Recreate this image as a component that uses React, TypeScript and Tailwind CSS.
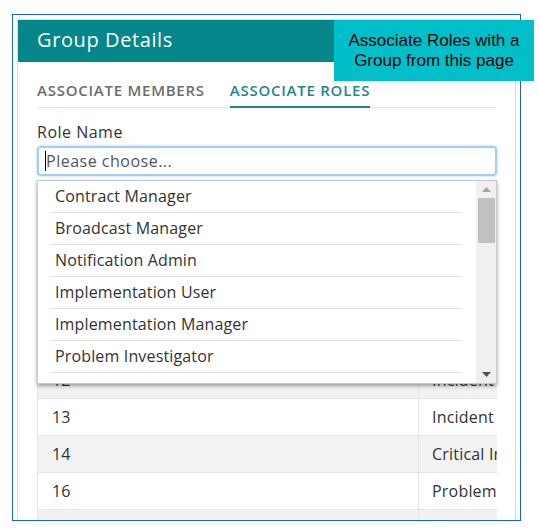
import React from "react";

const items = [
  "Contract Manager",
  "Broadcast Manager",
  "Notification Admin",
  "Implementation User",
  "Implementation Manager",
  "Problem Investigator",
];

const rows = [
  { id: "8", name: "Incident Manager" },
  { id: "9", name: "Change Manager" },
  { id: "10", name: "Release Manager" },
  { id: "11", name: "Incident User" },
  { id: "12", name: "Incident Analyst" },
  { id: "13", name: "Incident Coordinator" },
  { id: "14", name: "Critical Incident Manager" },
  { id: "16", name: "Problem Manager" },
  { id: "17", name: "Service Desk" },
];

export default function App() {
  return (
    <div className="relative w-[539px] h-[531px] bg-white overflow-hidden" style={{ fontFamily: '"Open Sans", sans-serif' }}>
      <div className="ml-[12px] mt-[14px] w-[509px] h-[507px] border border-[#1d61e0] p-[4px] overflow-hidden">
        <div className="relative w-[499px] h-[520px] border border-[#dcdcdc] bg-white">
          <div className="h-[42px] bg-[#04868b] flex items-center pl-[19px] pb-[3px]">
            <span className="text-white text-[20px] leading-none tracking-[0.6px]">Group Details</span>
          </div>
          <div className="px-[19px] pt-[18px]">
            <div className="flex gap-[25px] border-b border-[#e3e3e3]">
              <div className="text-[15px] leading-[20px] font-semibold text-[#6d6d6d] tracking-[0.75px] pb-[7px]">ASSOCIATE MEMBERS</div>
              <div className="text-[15px] leading-[20px] font-semibold text-[#1f868b] tracking-[0.75px] pb-[5px] border-b-2 border-[#1f868b] -mb-px">ASSOCIATE ROLES</div>
            </div>
            <div className="mt-[14px] text-[16px] leading-[20px] text-[#333] tracking-[0.5px]">Role Name</div>
            <div className="mt-[4px] h-[30px] w-[460px] rounded-[4px] border-2 border-[#a5cdf2] shadow-[0_0_3px_rgba(100,160,230,0.5)] flex items-center pl-[6px]">
              <span className="w-px h-[20px] bg-black" />
              <span className="text-[16px] text-[#555] tracking-[0.5px]">Please choose...</span>
            </div>
            <div className="mt-[37px] w-[460px] overflow-hidden">
              {rows.map((r, i) => (
                <div
                  key={r.id}
                  className={`grid grid-cols-[381px_200px] h-[37px] border-t border-[#e4e4e4] ${i % 2 === 0 ? "bg-[#f2f2f2]" : "bg-white"}`}
                >
                  <div className="flex items-center pl-[14px] text-[16px] text-[#333] border-l border-[#e4e4e4]">{r.id}</div>
                  <div className="flex items-center pl-[13px] text-[16px] text-[#333] border-l border-[#e4e4e4] whitespace-nowrap tracking-[0.2px]">{r.name}</div>
                </div>
              ))}
            </div>
          </div>

          <div className="absolute left-[19px] top-[160px] w-[460px] h-[204px] bg-white border border-[#c8c8c8] shadow-[0_2px_4px_rgba(0,0,0,0.35)] flex">
            <div className="flex-1">
              <div className="ml-[12px] w-[412px]">
                {items.map((t) => (
                  <div key={t} className="h-[32px] border-b border-[#e0e0e0] flex items-center pl-[5px] pb-[1px] text-[16px] text-[#333] tracking-[0.15px]">
                    {t}
                  </div>
                ))}
              </div>
            </div>
            <div className="w-[20px] h-full bg-[#f0f0f0] flex flex-col items-center">
              <div className="h-[17px] flex items-center justify-center">
                <svg width="9" height="5" viewBox="0 0 9 5"><polygon points="0,5 9,5 4.5,0" fill="#a3a3a3" /></svg>
              </div>
              <div className="w-[17px] h-[45px] bg-[#c1c1c1]" />
              <div className="flex-1" />
              <div className="h-[17px] flex items-center justify-center">
                <svg width="9" height="5" viewBox="0 0 9 5"><polygon points="0,0 9,0 4.5,5" fill="#505050" /></svg>
              </div>
            </div>
          </div>
        </div>
      </div>

      <div className="absolute left-[334px] top-[20px] w-[200px] h-[61px] bg-[#00bfc8] flex items-center justify-center text-center">
        <span className="text-[17px] leading-[20px] text-black" style={{ fontFamily: '"Liberation Sans", Arial, sans-serif' }}>
          Associate Roles with a<br />Group from this page
        </span>
      </div>
    </div>
  );
}
